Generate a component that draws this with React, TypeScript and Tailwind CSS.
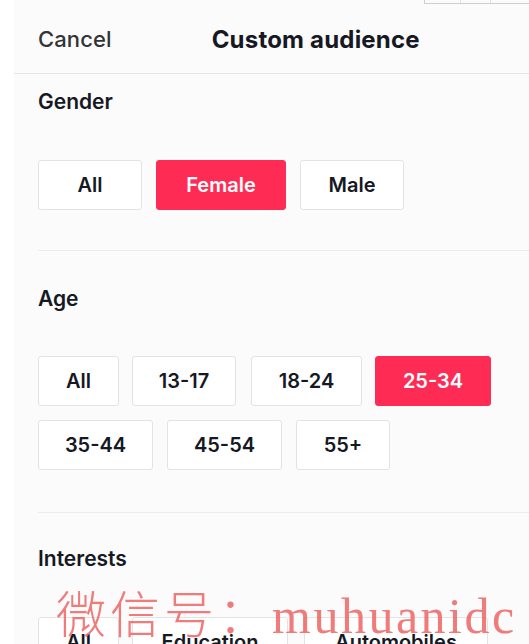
import React from "react";

const font = { fontFamily: '"Inter", "Open Sans", sans-serif' };

function Chip({ label, w, active, className = "" }: { label: string; w: number; active?: boolean; className?: string }) {
  return (
    <div
      className={
        "h-[50px] flex items-center justify-center rounded-[3px] text-[20px] font-semibold shrink-0 " +
        (active
          ? "bg-[#fe2c55] text-white border border-[#fe2c55] "
          : "bg-white text-[#161823] border border-[#e3e3e4] ") +
        className
      }
      style={{ width: w }}
    >
      {label}
    </div>
  );
}

export default function App() {
  return (
    <div className="relative w-[529px] h-[644px] overflow-hidden bg-white flex" style={font}>
      <div className="w-[14px] shrink-0 bg-white" />
      <div className="flex-1 bg-[#fbfbfb] flex flex-col">
        <div className="h-[74px] shrink-0 flex items-center border-b border-[#e6e6e7] pl-[24px] pt-[6px]">
          <span className="text-[22px] font-medium text-[#333438] tracking-[0.1px]">Cancel</span>
          <span className="ml-[100px] text-[24px] font-bold text-[#161823] tracking-[0.2px]">Custom audience</span>
        </div>

        <div className="pl-[24px] flex flex-col">
          <div className="mt-[16px] leading-[24px] text-[21px] font-semibold text-[#161823]">Gender</div>
          <div className="mt-[46px] flex gap-[14px]">
            <Chip label="All" w={104} />
            <Chip label="Female" w={130} active />
            <Chip label="Male" w={104} />
          </div>
          <div className="mt-[40px] h-px bg-[#ececed]" />

          <div className="mt-[36px] leading-[24px] text-[21px] font-semibold text-[#161823]">Age</div>
          <div className="mt-[45px] flex flex-col gap-[14px]">
            <div className="flex">
              <Chip label="All" w={81} />
              <Chip label="13-17" w={104} className="ml-[13px]" />
              <Chip label="18-24" w={111} className="ml-[15px]" />
              <Chip label="25-34" w={116} active className="ml-[13px]" />
            </div>
            <div className="flex gap-[14px]">
              <Chip label="35-44" w={115} />
              <Chip label="45-54" w={115} />
              <Chip label="55+" w={94} />
            </div>
          </div>
          <div className="mt-[42px] h-px bg-[#ececed]" />

          <div className="mt-[34px] leading-[24px] text-[21px] font-semibold text-[#161823]">Interests</div>
          <div className="mt-[46px] flex">
            <Chip label="All" w={81} />
            <Chip label="Education" w={156} className="ml-[13px]" />
            <Chip label="Automobiles" w={184} className="ml-[16px]" />
          </div>
        </div>
      </div>

      <div className="absolute top-0 left-[424px] w-[105px] h-[4px] border-b border-l border-[#cfcfcf] flex">
        <div className="w-[36px] border-r border-[#e2e2e2]" />
        <div className="w-[30px] border-r border-[#e2e2e2]" />
      </div>

      <div
        className="absolute left-[56px] top-[574px] flex items-baseline text-[rgba(236,100,100,0.85)] pointer-events-none whitespace-nowrap"
      >
        <span
          className="text-[50px] font-light tracking-[4px]"
          style={{ fontFamily: '"Noto Sans CJK SC", sans-serif' }}
        >
          微信号：
        </span>
        <span
          className="ml-[0px] text-[50px] tracking-[2.5px]"
          style={{ fontFamily: '"Liberation Serif", serif' }}
        >
          muhuanidc
        </span>
      </div>
    </div>
  );
}
